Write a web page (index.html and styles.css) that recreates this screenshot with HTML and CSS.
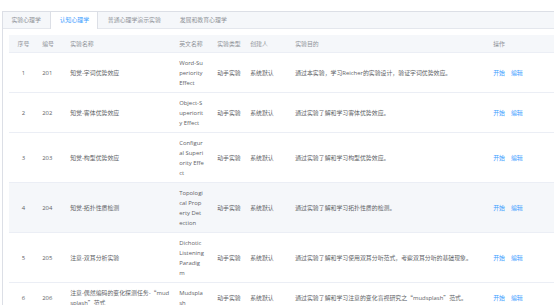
FILE: index.html
```html
<!DOCTYPE html>
<html lang="zh-CN">
<head>
<meta charset="UTF-8">
<meta name="viewport" content="width=device-width, initial-scale=1.0">
<title>实验列表</title>
<link rel="stylesheet" href="styles.css">
</head>
<body>

<div class="tabs">
    <div class="tabs-header">
        <div class="tab">实验心理学</div>
        <div class="tab active">认知心理学</div>
        <div class="tab">普通心理学演示实验</div>
        <div class="tab">发展和教育心理学</div>
    </div>
    <div class="tabs-content">
        <table class="list">
            <colgroup>
                <col class="c-index">
                <col class="c-code">
                <col class="c-name">
                <col class="c-en">
                <col class="c-type">
                <col class="c-user">
                <col class="c-goal">
                <col class="c-op">
            </colgroup>
            <thead>
                <tr>
                    <th class="center">序号</th>
                    <th>编号</th>
                    <th>实验名称</th>
                    <th>英文名称</th>
                    <th>实验类型</th>
                    <th>创建人</th>
                    <th>实验目的</th>
                    <th>操作</th>
                </tr>
            </thead>
            <tbody>
                <tr>
                    <td class="center">1</td>
                    <td>201</td>
                    <td>知觉-字词优势效应</td>
                    <td class="en">Word-Superiority Effect</td>
                    <td>动手实验</td>
                    <td>系统默认</td>
                    <td>通过本实验，学习Reicher的实验设计，验证字词优势效应。</td>
                    <td><a href="#">开始</a><a href="#">编辑</a></td>
                </tr>
                <tr>
                    <td class="center">2</td>
                    <td>202</td>
                    <td>知觉-客体优势效应</td>
                    <td class="en">Object-Superiority Effect</td>
                    <td>动手实验</td>
                    <td>系统默认</td>
                    <td>通过实验了解和学习客体优势效应。</td>
                    <td><a href="#">开始</a><a href="#">编辑</a></td>
                </tr>
                <tr>
                    <td class="center">3</td>
                    <td>203</td>
                    <td>知觉-构型优势效应</td>
                    <td class="en">Configural Superiority Effect</td>
                    <td>动手实验</td>
                    <td>系统默认</td>
                    <td>通过实验了解和学习构型优势效应。</td>
                    <td><a href="#">开始</a><a href="#">编辑</a></td>
                </tr>
                <tr class="hover">
                    <td class="center">4</td>
                    <td>204</td>
                    <td>知觉-拓扑性质检测</td>
                    <td class="en">Topological Property Detection</td>
                    <td>动手实验</td>
                    <td>系统默认</td>
                    <td>通过实验了解和学习拓扑性质的检测。</td>
                    <td><a href="#">开始</a><a href="#">编辑</a></td>
                </tr>
                <tr>
                    <td class="center">5</td>
                    <td>205</td>
                    <td>注意-双耳分析实验</td>
                    <td class="en">Dichotic Listening Paradigm</td>
                    <td>动手实验</td>
                    <td>系统默认</td>
                    <td>通过实验了解和学习使用双耳分听范式，考察双耳分听的基础现象。</td>
                    <td><a href="#">开始</a><a href="#">编辑</a></td>
                </tr>
                <tr>
                    <td class="center">6</td>
                    <td>206</td>
                    <td>注意-偶然编码的变化探测任务-<span class="cjk">“</span>mudsplash<span class="cjk">”</span>范式</td>
                    <td class="en">Mudsplash</td>
                    <td>动手实验</td>
                    <td>系统默认</td>
                    <td>通过实验了解和学习注意的变化盲视研究之<span class="cjk">“</span>mudsplash<span class="cjk">”</span>范式。</td>
                    <td><a href="#">开始</a><a href="#">编辑</a></td>
                </tr>
            </tbody>
        </table>
    </div>
</div>

</body>
</html>
```

FILE: styles.css
```css
body {
    margin: 0;
    overflow: hidden;
    background-color: #fff;
    font-family: "Open Sans", "Noto Sans CJK SC", sans-serif;
    font-size: 5.9px;
    color: #606266;
}
.tabs {
    margin: 11px 0 0 2px;
    border: 1px solid #dcdfe6;
    border-right: none;
    background-color: #fff;
}
.tabs-header {
    display: flex;
    height: 16px;
    background-color: #f5f7fa;
    border-bottom: 1px solid #e4e7ed;
}
.tab {
    padding: 0 8.4px;
    line-height: 16px;
    color: #909399;
    border-left: 1px solid transparent;
    border-right: 1px solid transparent;
}
.tab.active {
    color: #409eff;
    background-color: #fff;
    border-left-color: #dcdfe6;
    border-right-color: #dcdfe6;
    height: 17px;
}
.tab:first-child {
    border-left: none;
}
.tabs-content {
    padding: 6px 0 0 6px;
}
.list {
    border-collapse: collapse;
    table-layout: fixed;
    width: 100%;
}
.c-index { width: 29px; }
.c-code { width: 28px; }
.c-name { width: 109px; }
.c-en { width: 38px; }
.c-type { width: 33px; }
.c-user { width: 45px; }
.c-goal { width: 198px; }
.list th,
.list td {
    padding: 4.5px 4.2px;
    line-height: 10px;
    text-align: left;
    vertical-align: middle;
    word-break: break-all;
    border-bottom: 1px solid #ebeef5;
}
.list td.en {
    padding-right: 8.6px;
}
.list th {
    padding-top: 3.5px;
    padding-bottom: 3.5px;
    font-weight: normal;
    color: #909399;
    background-color: #f5f7fa;
}
.list .center {
    text-align: center;
}
.list tr.hover td {
    background-color: #f5f7fa;
}
.list a {
    color: #409eff;
    text-decoration: none;
    margin-right: 6px;
}
.cjk {
    font-family: "Noto Sans CJK SC", sans-serif;
    line-height: 0;
}
```
